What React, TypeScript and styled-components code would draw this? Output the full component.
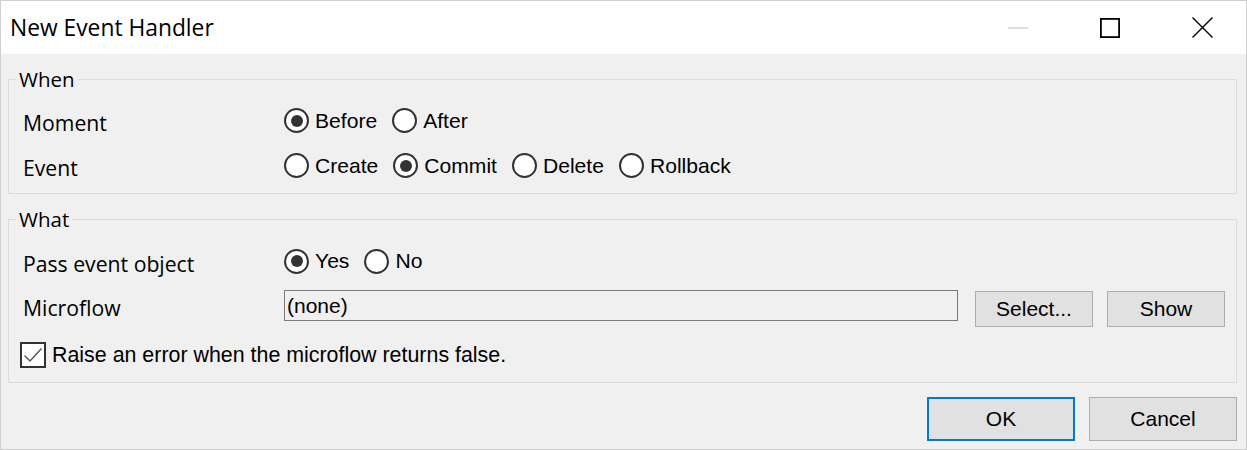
import React from "react";
import styled, { createGlobalStyle } from "styled-components";

const Global = createGlobalStyle`
  html, body { margin: 0; padding: 0; background: #ffffff; }
  * { box-sizing: border-box; }
`;

const UI = `"Open Sans", "Noto Sans", sans-serif`;
const CLASSIC = `"Liberation Sans", Arial, sans-serif`;

const Window = styled.div`
  width: 1247px;
  height: 450px;
  border: 1px solid #cfcfcf;
  background: #f0f0f0;
  display: flex;
  flex-direction: column;
  overflow: hidden;
`;

const TitleBar = styled.div`
  height: 53px;
  flex: none;
  background: #ffffff;
  display: flex;
  align-items: center;
  padding-left: 9px;
`;

const Title = styled.div`
  flex: 1;
  font-family: ${UI};
  font-size: 22.8px;
  color: #000;
  padding-bottom: 1px;
`;

const Controls = styled.div`
  display: flex;
  height: 100%;
  margin-right: -2px;
`;

const CaptionButton = styled.div`
  width: 92px;
  height: 100%;
  display: flex;
  align-items: center;
  justify-content: center;
`;

const Body = styled.div`
  flex: 1;
  display: flex;
  flex-direction: column;
  padding: 13px 8px 8px 7px;
`;

const Group = styled.fieldset<{ $gapTop?: number }>`
  margin: ${(p) => p.$gapTop ?? 0}px 1px 0 0;
  border: 1px solid #dcdcdc;
  padding: 0 11px 5px 14px;
  min-width: 0;
`;

const Legend = styled.legend`
  font-family: ${UI};
  font-size: 20.5px;
  line-height: 24px;
  color: #000;
  padding: 0 3px;
  margin-left: -7px;
`;

const Rows = styled.div<{ $padTop: number }>`
  padding-top: ${(p) => p.$padTop}px;
  display: flex;
  flex-direction: column;
`;

const Row = styled.div<{ $h: number }>`
  display: grid;
  grid-template-columns: 261px 1fr;
  align-items: center;
  height: ${(p) => p.$h}px;
`;

const Label = styled.div`
  font-family: ${UI};
  font-size: 21.2px;
  color: #000;
  padding-top: 4px;
`;

const RadioGroup = styled.div`
  display: flex;
  align-items: center;
  gap: 15px;
`;

const Option = styled.label`
  display: flex;
  align-items: center;
  gap: 6px;
  font-family: ${CLASSIC};
  font-size: 21.1px;
  color: #000;
`;

const Circle = styled.span<{ $on: boolean }>`
  width: 25px;
  height: 25px;
  border-radius: 50%;
  border: 2px solid #333333;
  background: #ffffff;
  display: flex;
  align-items: center;
  justify-content: center;
  &::after {
    content: "";
    width: 12px;
    height: 12px;
    border-radius: 50%;
    background: ${(p) => (p.$on ? "#333333" : "transparent")};
  }
`;

const FieldLine = styled.div`
  display: flex;
  align-items: flex-start;
  align-self: start;
  margin-top: 7px;
`;

const TextField = styled.div`
  flex: 1;
  height: 31px;
  border: 1px solid #7a7a7a;
  background: #f0f0f0;
  font-family: ${CLASSIC};
  font-size: 21px;
  line-height: 29px;
  padding-left: 2px;
  color: #000;
`;

const Button = styled.div<{ $w: number; $h: number; $default?: boolean }>`
  width: ${(p) => p.$w}px;
  height: ${(p) => p.$h}px;
  background: #e1e1e1;
  border: ${(p) => (p.$default ? "2px solid #0078d7" : "1px solid #adadad")};
  display: flex;
  align-items: center;
  justify-content: center;
  font-family: ${CLASSIC};
  font-size: 21px;
  color: #000;
  flex: none;
`;

const SideButtons = styled.div`
  display: flex;
  gap: 14px;
  margin-left: 17px;
  margin-top: 1px;
`;

const CheckRow = styled.label`
  display: flex;
  align-items: center;
  gap: 6px;
  margin: 6px 0 0 -3px;
  height: 44px;
  font-family: ${CLASSIC};
  font-size: 21.4px;
  color: #000;
`;

const CheckBox = styled.span`
  width: 26px;
  height: 26px;
  border: 2px solid #333333;
  background: #ffffff;
  display: flex;
  align-items: center;
  justify-content: center;
`;

const Footer = styled.div`
  display: flex;
  justify-content: flex-end;
  gap: 14px;
  margin: 14px 1px 0 0;
`;

function Radio({ label, on }: { label: string; on?: boolean }) {
  return (
    <Option>
      <Circle $on={!!on} />
      {label}
    </Option>
  );
}

export default function App() {
  return (
    <>
      <Global />
      <Window>
        <TitleBar>
          <Title>New Event Handler</Title>
          <Controls>
            <CaptionButton>
              <svg width="20" height="2" viewBox="0 0 20 2">
                <line x1="0" y1="1" x2="20" y2="1" stroke="#c8c8c8" strokeWidth="1.2" />
              </svg>
            </CaptionButton>
            <CaptionButton>
              <svg width="20" height="20" viewBox="0 0 20 20">
                <rect x="0.9" y="0.9" width="18.2" height="18.2" fill="none" stroke="#000" strokeWidth="1.8" />
              </svg>
            </CaptionButton>
            <CaptionButton>
              <svg width="21" height="21" viewBox="0 0 21 21">
                <path d="M0.5 0.5 L20.5 20.5 M20.5 0.5 L0.5 20.5" stroke="#000" strokeWidth="1.4" />
              </svg>
            </CaptionButton>
          </Controls>
        </TitleBar>
        <Body>
          <Group>
            <Legend>When</Legend>
            <Rows $padTop={7}>
              <Row $h={45}>
                <Label>Moment</Label>
                <RadioGroup>
                  <Radio label="Before" on />
                  <Radio label="After" />
                </RadioGroup>
              </Row>
              <Row $h={45}>
                <Label>Event</Label>
                <RadioGroup>
                  <Radio label="Create" />
                  <Radio label="Commit" on />
                  <Radio label="Delete" />
                  <Radio label="Rollback" />
                </RadioGroup>
              </Row>
            </Rows>
          </Group>
          <Group $gapTop={13}>
            <Legend>What</Legend>
            <Rows $padTop={8}>
              <Row $h={44}>
                <Label>Pass event object</Label>
                <RadioGroup>
                  <Radio label="Yes" on />
                  <Radio label="No" />
                </RadioGroup>
              </Row>
              <Row $h={44}>
                <Label>Microflow</Label>
                <FieldLine>
                  <TextField>(none)</TextField>
                  <SideButtons>
                    <Button $w={118} $h={36}>Select...</Button>
                    <Button $w={118} $h={36}>Show</Button>
                  </SideButtons>
                </FieldLine>
              </Row>
              <CheckRow>
                <CheckBox>
                  <svg width="20" height="16" viewBox="0 0 20 16">
                    <path d="M1.5 8.5 L7 14 L18.5 1.5" fill="none" stroke="#555" strokeWidth="1.4" />
                  </svg>
                </CheckBox>
                Raise an error when the microflow returns false.
              </CheckRow>
            </Rows>
          </Group>
          <Footer>
            <Button $w={148} $h={44} $default>OK</Button>
            <Button $w={148} $h={44}>Cancel</Button>
          </Footer>
        </Body>
      </Window>
    </>
  );
}
